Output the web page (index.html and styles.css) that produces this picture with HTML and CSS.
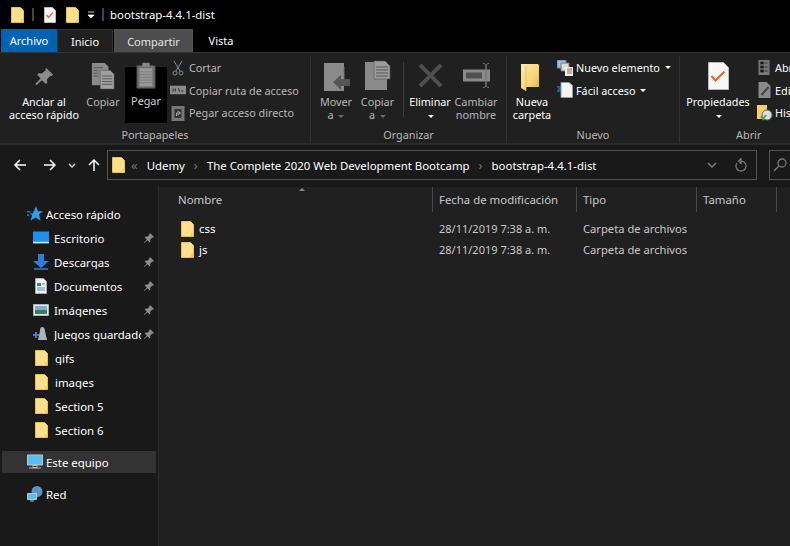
FILE: index.html
```html
<!DOCTYPE html>
<html lang="es">

<head>
    <meta charset="UTF-8">
    <meta name="viewport" content="width=device-width, initial-scale=1.0">
    <title>bootstrap-4.4.1-dist</title>
    <link rel="stylesheet" href="styles.css">
</head>

<body>
    <svg class="defs" width="0" height="0">
        <symbol id="folder" viewBox="0 0 13 16">
            <path d="M.5.5h9l3 3v12H.5z" fill="#ffe08a" stroke="#e8c04e"/>
            <path d="M10 15v-3h2.500v3z" fill="#f3cf66"/>
        </symbol>
        <symbol id="pin" viewBox="0 0 12 12">
            <path d="M7 1l4 4-1 .7-.8-.2-2 2.200.2 1.800-1 .8L4.300 8.200 1.500 11 1 10.500l2.800-2.800L1.700 5.600l.8-1 1.800.2 2.200-2-.2-.8z" fill="#8c8c8c"/>
        </symbol>
    </svg>

    <!-- barra de titulo -->
    <div class="titlebar">
        <svg class="qa-folder"><use href="#folder"/></svg>
        <span class="qa-sep"></span>
        <svg class="qa-check" viewBox="0 0 12 16">
            <path d="M.5.500h8l3 3v12H.5z" fill="#f5f5f5" stroke="#bbb"/>
            <path d="M2.500 8l2 2.500 4.500-5" fill="none" stroke="#e8622c" stroke-width="1.400"/>
        </svg>
        <svg class="qa-folder qa-folder2"><use href="#folder"/></svg>
        <svg class="qa-drop" viewBox="0 0 8 8">
            <path d="M1 1h6M1 4h6L4 7z" fill="#fff" stroke="#fff" stroke-width=".8"/>
        </svg>
        <span class="qa-sep qa-sep2"></span>
        <span class="title-text">bootstrap-4.4.1-dist</span>
    </div>

    <div class="tabs">
        <div class="tab tab-file">Archivo</div>
        <div class="tab tab-active">Inicio</div>
        <div class="tab tab-hover">Compartir</div>
        <div class="tab tab-plain">Vista</div>
    </div>

    <div class="ribbon">
        <div class="group group-clip">
            <div class="group-body">
                <div class="big big-pin">
                    <svg class="big-icon" viewBox="0 0 24 24">
                        <path d="M15 2l8 8-2 1.500-1.500-.5-4 4.500.5 4-2 1.500-4.500-4.500L3 22.500 1.500 21l6.500-6.500-4-4.500 1.500-2 4 .5 4.500-4-.5-1.500z" fill="#8a8a8a"/>
                    </svg>
                    <span>Anclar al<br>acceso rápido</span>
                </div>
                <div class="big big-copy dim">
                    <svg class="big-icon" viewBox="0 0 26 30">
                        <path d="M1 1h14l4 4v20H1z" fill="#8a8a8a"/>
                        <path d="M10 9h11l4 4v16H10z" fill="#a0a0a0" stroke="#555" stroke-width=".6"/>
                        <path d="M12 15h11M12 18h11M12 21h11M12 24h11M3 6h10M3 9h5M3 12h5M3 15h5" stroke="#555"/>
                    </svg>
                    <span>Copiar</span>
                </div>
                <div class="big big-paste dim">
                    <svg class="big-icon paste-icon" viewBox="0 0 22 30">
                        <path d="M1 4h20v25H1z" fill="#6f6f6f" stroke="#444"/>
                        <path d="M7 1h8v4H7z" fill="#888"/>
                        <path d="M4 7h14v20H4z" fill="#999"/>
                        <path d="M4 11h14M4 14h14M4 17h14M4 20h14M4 23h14" stroke="#777"/>
                    </svg>
                    <span>Pegar</span>
                </div>
                <div class="small-col dim">
                    <div class="small">
                        <svg viewBox="0 0 14 16" class="small-icon">
                            <path d="M3 1l6 10M11 1L5 11" stroke="#8a8a8a" fill="none"/>
                            <circle cx="4" cy="13" r="2" fill="none" stroke="#8a8a8a"/>
                            <circle cx="10" cy="13" r="2" fill="none" stroke="#8a8a8a"/>
                        </svg>
                        Cortar
                    </div>
                    <div class="small">
                        <svg viewBox="0 0 15 10" class="small-icon">
                            <path d="M0 1h15v8H0z" fill="#8a8a8a"/>
                            <path d="M3 3.500v3M5 3.500v3M8 3.500l1 3M10.500 6h2" stroke="#333"/>
                        </svg>
                        Copiar ruta de acceso
                    </div>
                    <div class="small">
                        <svg viewBox="0 0 13 16" class="small-icon">
                            <path d="M0 1h13v15H0z" fill="#777"/>
                            <path d="M3 4h7v9H3z" fill="#333"/>
                            <path d="M5 11V8h3M6 6l3 2-3 2" stroke="#aaa" fill="none"/>
                        </svg>
                        Pegar acceso directo
                    </div>
                </div>
            </div>
            <div class="group-label">Portapapeles</div>
        </div>

        <div class="group group-org">
            <div class="group-body">
                <div class="big big-move dim">
                    <svg class="big-icon" viewBox="0 0 27 29">
                        <path d="M1 1h20v28H1z" fill="#8a8a8a"/>
                        <path d="M21 5v16" stroke="#777"/>
                        <path d="M10 20l8-7v4h9v7h-9v4z" fill="#555"/>
                    </svg>
                    <span>Mover<br>a <i class="caret caret-dim"></i></span>
                </div>
                <div class="big big-copyto dim">
                    <svg class="big-icon" viewBox="0 0 27 30">
                        <path d="M1 2h22v28H1z" fill="#8a8a8a"/>
                        <path d="M10 1h11l5 5v13H10z" fill="#9c9c9c" stroke="#555" stroke-width=".6"/>
                        <path d="M12 7h12M12 10h12M12 13h12M12 16h12" stroke="#555"/>
                    </svg>
                    <span>Copiar<br>a <i class="caret caret-dim"></i></span>
                </div>
                <span class="vsep"></span>
                <div class="big big-del">
                    <svg class="big-icon" viewBox="0 0 26 26">
                        <path d="M2 2l22 22M24 2L2 24" stroke="#505050" stroke-width="4"/>
                    </svg>
                    <span>Eliminar<br><i class="caret"></i></span>
                </div>
                <div class="big big-ren dim">
                    <svg class="big-icon" viewBox="0 0 29 26">
                        <path d="M1 7h27v12H1z" fill="#8a8a8a"/>
                        <path d="M4 10h16v6H4z" fill="#505050"/>
                        <path d="M21 1c2 0 3 1 3 2v20c0 1-1 2-3 2M27 1c-2 0-3 1-3 2v20c0 1 1 2 3 2" stroke="#777" fill="none"/>
                    </svg>
                    <span>Cambiar<br>nombre</span>
                </div>
            </div>
            <div class="group-label">Organizar</div>
        </div>

        <div class="group group-new">
            <div class="group-body">
                <div class="big big-newf">
                    <svg class="big-icon" viewBox="0 0 19 28">
                        <defs>
                            <linearGradient id="fold" x1="0" y1="0" x2="1" y2="1">
                                <stop offset="0" stop-color="#fdeaa8"/>
                                <stop offset=".6" stop-color="#f6d47a"/>
                                <stop offset="1" stop-color="#dfae3e"/>
                            </linearGradient>
                        </defs>
                        <path d="M0 1h17l1 1v22H5v4l-5-3z" fill="url(#fold)"/>
                        <path d="M5 3v25" stroke="#e2b64c" stroke-width=".7"/>
                    </svg>
                    <span>Nueva<br>carpeta</span>
                </div>
                <div class="small-col">
                    <div class="small">
                        <svg viewBox="0 0 16 16" class="small-icon">
                            <path d="M0 0h9v8H0z" fill="#9cc3e8" stroke="#777"/>
                            <path d="M4 3h8v8H4z" fill="#ddd" stroke="#777"/>
                            <path d="M8 7h8v9H8z" fill="#f2f2f2"/>
                            <path d="M10 9h5M10 11h5M10 13h5" stroke="#c0573a"/>
                        </svg>
                        Nuevo elemento <i class="caret"></i>
                    </div>
                    <div class="small">
                        <svg viewBox="0 0 16 16" class="small-icon">
                            <path d="M4 .5h8l3.500 3v12H4z" fill="#f5f5f5" stroke="#999"/>
                            <path d="M0 5h4M1 7h3M0 9h4" stroke="#3d8fd6"/>
                        </svg>
                        Fácil acceso <i class="caret"></i>
                    </div>
                </div>
            </div>
            <div class="group-label">Nuevo</div>
        </div>

        <div class="group group-open">
            <div class="group-body">
                <div class="big big-prop">
                    <svg class="big-icon" viewBox="0 0 21 28">
                        <path d="M.5.500h15l5 5v22H.5z" fill="#f7f7f7" stroke="#bbb"/>
                        <path d="M3.500 14l4 4.500 9-9" fill="none" stroke="#e8622c" stroke-width="2"/>
                    </svg>
                    <span>Propiedades<br><i class="caret"></i></span>
                </div>
                <div class="small-col">
                    <div class="small">
                        <svg viewBox="0 0 13 16" class="small-icon">
                            <path d="M0 0h11v15H0z" fill="#777"/>
                            <path d="M2 2h3v2H2zM2 6h3v2H2zM2 10h3v2H2zM6 3h3M6 7h3M6 11h3" stroke="#333"/>
                        </svg>
                        Abrir
                    </div>
                    <div class="small">
                        <svg viewBox="0 0 13 16" class="small-icon">
                            <path d="M0 0h8l4 4v12H0z" fill="#8a8a8a"/>
                            <path d="M3 13l7-8" stroke="#444" stroke-width="2"/>
                        </svg>
                        Editar
                    </div>
                    <div class="small">
                        <svg viewBox="0 0 16 16" class="small-icon">
                            <path d="M0 0h10v14H0z" fill="#f4cf6c"/>
                            <circle cx="10" cy="10" r="5" fill="#ddd" stroke="#666"/>
                            <path d="M4 11l2 3 3-4" stroke="#3fae3f" stroke-width="2" fill="none"/>
                        </svg>
                        Historial
                    </div>
                </div>
            </div>
            <div class="group-label">Abrir</div>
        </div>
    </div>

    <!-- direccion -->
    <div class="addressrow">
        <svg class="nav-arrow" viewBox="0 0 14 14"><path d="M13 7H2M7 2L2 7l5 5" stroke="#fff" stroke-width="1.500" fill="none"/></svg>
        <svg class="nav-arrow" viewBox="0 0 14 14"><path d="M1 7h11M7 2l5 5-5 5" stroke="#fff" stroke-width="1.500" fill="none"/></svg>
        <svg class="nav-down" viewBox="0 0 8 5"><path d="M1 1l3 3 3-3" stroke="#ddd" stroke-width="1.300" fill="none"/></svg>
        <svg class="nav-arrow nav-up" viewBox="0 0 14 14"><path d="M7 13V2M2 7l5-5 5 5" stroke="#fff" stroke-width="1.500" fill="none"/></svg>
        <div class="addressbox">
            <svg class="addr-folder"><use href="#folder"/></svg>
            <span class="crumb-sep crumb-first">«</span>
            <span class="crumb">Udemy</span>
            <span class="crumb-sep">›</span>
            <span class="crumb">The Complete 2020 Web Development Bootcamp</span>
            <span class="crumb-sep">›</span>
            <span class="crumb">bootstrap-4.4.1-dist</span>
            <svg class="addr-drop" viewBox="0 0 10 6"><path d="M1 1l4 4 4-4" stroke="#7c7c7c" stroke-width="1.500" fill="none"/></svg>
            <svg class="addr-refresh" viewBox="0 0 12 14"><path d="M6 3a5 5 0 1 1-4 2M6 .5v5L3.500 3z" stroke="#7c7c7c" stroke-width="1.200" fill="none"/></svg>
        </div>
        <div class="searchbox">
            <svg class="search-icon" viewBox="0 0 14 14"><circle cx="9" cy="5" r="4" fill="none" stroke="#777" stroke-width="1.300"/><path d="M6 8l-5 5" stroke="#777" stroke-width="1.500"/></svg>
        </div>
    </div>

    <div class="main">
        <nav class="sidebar">
            <div class="nav-row head first">
                <svg class="nav-icon" viewBox="0 0 14 14"><path d="M8 0l1.500 4.500H14l-3.500 3L12 13 7.500 10 3 13l1.500-5L2 6.500h3z" fill="#2f9bea"/><path d="M0 5h3M0 8h2" stroke="#2f9bea"/></svg>
                <span class="nav-label">Acceso rápido</span>
            </div>
            <div class="nav-row">
                <svg class="nav-icon" viewBox="0 0 16 13"><path d="M0 0h16v12H0z" fill="#1e90f0"/><path d="M0 11h16" stroke="#c8e4fb" stroke-width="1.500"/></svg>
                <span class="nav-label">Escritorio</span>
                <svg class="nav-pin"><use href="#pin"/></svg>
            </div>
            <div class="nav-row">
                <svg class="nav-icon" viewBox="0 0 16 16"><path d="M5 0h6v7h5l-8 7-8-7h5z" fill="#2f7fd6"/><path d="M1 15h14" stroke="#2f7fd6" stroke-width="1.500"/></svg>
                <span class="nav-label">Descargas</span>
                <svg class="nav-pin"><use href="#pin"/></svg>
            </div>
            <div class="nav-row">
                <svg class="nav-icon" viewBox="0 0 14 16"><path d="M1.500.500h8l3 3v12h-11z" fill="#f2f2f2" stroke="#aaa"/><path d="M3 5h4v3H3z" fill="#2f7fd6"/><path d="M3 10h8M3 12h8M8 6h3" stroke="#5f88b0"/></svg>
                <span class="nav-label">Documentos</span>
                <svg class="nav-pin"><use href="#pin"/></svg>
            </div>
            <div class="nav-row">
                <svg class="nav-icon" viewBox="0 0 16 12"><path d="M.5.500h15v11H.5z" fill="#dfe7ee" stroke="#b5b5b5"/><path d="M2 2h12v4H2z" fill="#7fb0cc"/><path d="M2 6h12v4H2z" fill="#3f7a5c"/></svg>
                <span class="nav-label">Imágenes</span>
                <svg class="nav-pin"><use href="#pin"/></svg>
            </div>
            <div class="nav-row">
                <svg class="nav-icon" viewBox="0 0 16 16"><path d="M9 1c2 0 3 2 3 4l2 9H5l2-9C7 3 7.500 1 9 1z" fill="#aab4be"/><path d="M0 9h6M3 6v6" stroke="#3d7fd0" stroke-width="2"/></svg>
                <span class="nav-label">Juegos guardados</span>
                <svg class="nav-pin"><use href="#pin"/></svg>
            </div>
            <div class="nav-row"><svg class="nav-icon nav-folder"><use href="#folder"/></svg><span class="nav-label">gifs</span></div>
            <div class="nav-row"><svg class="nav-icon nav-folder"><use href="#folder"/></svg><span class="nav-label">images</span></div>
            <div class="nav-row"><svg class="nav-icon nav-folder"><use href="#folder"/></svg><span class="nav-label">Section 5</span></div>
            <div class="nav-row"><svg class="nav-icon nav-folder"><use href="#folder"/></svg><span class="nav-label">Section 6</span></div>
            <div class="nav-row head pc">
                <svg class="nav-icon" viewBox="0 0 16 15"><path d="M.5.500h15v10H.5z" fill="#59bdf5" stroke="#c4c4c4"/><path d="M6 11h4v2H6zM2 13.500h12" stroke="#c4c4c4"/></svg>
                <span class="nav-label">Este equipo</span>
            </div>
            <div class="nav-row head red">
                <svg class="nav-icon" viewBox="0 0 16 16"><circle cx="10" cy="5.500" r="5.500" fill="#5b93c4"/><path d="M.5 7.500h9v6h-9z" fill="#59bdf5" stroke="#c4c4c4"/><path d="M3 15h4" stroke="#c4c4c4"/></svg>
                <span class="nav-label">Red</span>
            </div>
        </nav>

        <section class="files">
            <span class="sort-arrow"></span>
            <div class="file-head">
                <div class="col col-name">Nombre</div>
                <div class="col col-date">Fecha de modificación</div>
                <div class="col col-type">Tipo</div>
                <div class="col col-size">Tamaño</div>
            </div>
            <div class="file-row">
                <div class="cell col-name"><svg class="file-icon"><use href="#folder"/></svg>css</div>
                <div class="cell col-date">28/11/2019 7:38 a. m.</div>
                <div class="cell col-type">Carpeta de archivos</div>
            </div>
            <div class="file-row">
                <div class="cell col-name"><svg class="file-icon"><use href="#folder"/></svg>js</div>
                <div class="cell col-date">28/11/2019 7:38 a. m.</div>
                <div class="cell col-type">Carpeta de archivos</div>
            </div>
        </section>
    </div>
</body>

</html>
```

FILE: styles.css
```css
* {
    box-sizing: border-box;
}

html, body {
    height: 100%;
}

body {
    margin: 0;
    width: 790px;
    height: 546px;
    overflow: hidden;
    background: #191919;
    color: #fff;
    font-family: 'Noto Sans', 'Open Sans', sans-serif;
    font-size: 11.4px;
    line-height: 13px;
    display: flex;
    flex-direction: column;
}

svg {
    flex: none;
    display: block;
}

.defs {
    position: absolute;
}

/* title bar */
.titlebar {
    height: 29px;
    background: #000;
    display: flex;
    align-items: center;
    padding-left: 11px;
    flex: none;
}

.qa-folder {
    width: 13px;
    height: 16px;
}

.qa-sep {
    width: 2px;
    height: 13px;
    background: #444;
    margin-left: 8px;
}

.qa-sep2 {
    margin-left: 7px;
}

.qa-check {
    width: 12px;
    height: 16px;
    margin-left: 10px;
}

.qa-folder2 {
    margin-left: 10px;
}

.qa-drop {
    width: 8px;
    height: 8px;
    margin-left: 8px;
}

.title-text {
    margin-left: 6px;
}

/* tabs */
.tabs {
    height: 23px;
    background: #000;
    display: flex;
    flex: none;
    font-size: 11px;
}

.tab {
    height: 23px;
    display: flex;
    align-items: center;
    justify-content: center;
}

.tab-file {
    width: 56px;
    margin-left: 1px;
    background: #0063b1;
}

.tab-active {
    width: 56px;
    background: #202020;
    border: 1px solid #333;
    border-bottom: none;
}

.tab-hover {
    width: 79px;
    margin-left: 1px;
    background: #4d4d4d;
    border: 1px solid #555;
    border-bottom: none;
    color: #e4e4e4;
}

.tab-plain {
    width: 56px;
}

/* ribbon */
.ribbon {
    height: 93px;
    background: #202020;
    border-top: 1px solid #333;
    border-bottom: 2px solid #2b2b2b;
    display: flex;
    flex: none;
    overflow: hidden;
    font-size: 10.8px;
}

.group {
    display: flex;
    flex-direction: column;
    flex: none;
    border-right: 1px solid #333;
    margin-top: 3px;
}

.group-clip {
    width: 311px;
}

.group-org {
    width: 196px;
}

.group-new {
    width: 173px;
}

.group-open {
    flex: 1;
    border-right: none;
}

.group-body {
    height: 72px;
    display: flex;
    color: #fff;
}

.group-label {
    text-align: center;
    color: #b8b8b8;
    height: 15px;
    line-height: 14px;
}

.big {
    display: flex;
    flex-direction: column;
    align-items: center;
    text-align: center;
    flex: none;
    height: 68px;
    white-space: nowrap;
}

.big span {
    margin-top: auto;
    margin-bottom: 3px;
    display: block;
}

.dim {
    color: #b8b8b8;
}

.big-pin {
    width: 72px;
    margin-left: 8px;
    padding-top: 10px;
}

.big-pin .big-icon {
    width: 20px;
    height: 21px;
}

.big-copy {
    width: 38px;
    margin-left: 4px;
    padding-top: 6px;
}

.big-copy .big-icon {
    width: 24px;
    height: 28px;
}

.big-copy span,
.big-paste span {
    margin-bottom: 16px;
}

.big-paste {
    width: 42px;
    margin-left: 3px;
    background: #000;
    margin-top: 11px;
    height: 56px;
    color: #d0d0d0;
}

.paste-icon {
    width: 20px;
    height: 29px;
    margin-top: -6px;
}

.small-col {
    display: flex;
    flex-direction: column;
    gap: 3.5px;
    margin-left: 3px;
    padding-top: 2px;
}

.small {
    height: 19px;
    display: flex;
    align-items: center;
    white-space: nowrap;
    gap: 3px;
}

.small-icon {
    width: 16px;
    height: 16px;
}

.big-move {
    width: 34px;
    margin-left: 8px;
    padding-top: 6px;
}

.big-move .big-icon {
    width: 27px;
    height: 29px;
}

.big-copyto {
    width: 37px;
    margin-left: 6px;
    padding-top: 4px;
}

.big-copyto .big-icon {
    width: 27px;
    height: 30px;
}

.vsep {
    width: 1px;
    height: 55px;
    background: #3d3d3d;
    margin: 6px 5px 0 7px;
    flex: none;
}

.big-del {
    width: 42px;
    padding-top: 7px;
}

.big-del .big-icon {
    width: 25px;
    height: 25px;
}

.big-ren {
    width: 44px;
    margin-left: 3px;
    padding-top: 6px;
}

.big-ren .big-icon {
    width: 29px;
    height: 27px;
}

.big-newf {
    width: 40px;
    margin-left: 5px;
    padding-top: 7px;
}

.big-newf .big-icon {
    width: 19px;
    height: 28px;
    margin-right: 4px;
}

.big-prop {
    width: 66px;
    margin-left: 5px;
    padding-top: 6px;
}

.big-prop .big-icon {
    width: 21px;
    height: 28px;
}

.group-new .small-col {
    margin-left: 5px;
}

.group-open .small-col {
    margin-left: 6px;
}

.group-open .small {
    gap: 2px;
}

.caret {
    display: inline-block;
    width: 0;
    height: 0;
    border: 3px solid transparent;
    border-top: 3px solid #fff;
    border-bottom: none;
    vertical-align: middle;
    margin-left: 2px;
}

.caret-dim {
    border-top-color: #6a6a6a;
}

/* address row */
.addressrow {
    height: 42px;
    background: #191919;
    display: flex;
    align-items: center;
    flex: none;
    padding: 0 0 2px 13px;
}

.nav-arrow {
    width: 14px;
    height: 14px;
}

.nav-arrow + .nav-arrow {
    margin-left: 16px;
}

.nav-down {
    width: 8px;
    height: 5px;
    margin-left: 11px;
}

.nav-up {
    margin-left: 11px;
}

.addressbox {
    width: 650px;
    height: 30px;
    margin-left: 6px;
    border: 1px solid #555;
    background: #191919;
    display: flex;
    align-items: center;
    padding-left: 4px;
    flex: none;
}

.addr-folder {
    width: 13px;
    height: 16px;
}

.crumb {
    white-space: nowrap;
}

.crumb-sep {
    color: #777;
    margin: 0 9px;
    font-size: 13px;
}

.crumb-first {
    margin: 0 9px 0 6px;
}

.addr-drop {
    width: 10px;
    height: 6px;
    margin-left: auto;
}

.addr-refresh {
    width: 12px;
    height: 14px;
    margin: 0 9px 0 18px;
}

.searchbox {
    width: 40px;
    height: 30px;
    margin-left: 12px;
    border: 1px solid #555;
    border-right: none;
    flex: none;
    padding: 7px 0 0 3px;
}

.search-icon {
    width: 14px;
    height: 14px;
}

/* main */
.main {
    flex: 1;
    display: flex;
    min-height: 0;
}

.sidebar {
    width: 159px;
    background: #191919;
    border-right: 1px solid #2b2b2b;
    flex: none;
    padding: 15px 2px 0;
}

.nav-row {
    height: 24px;
    display: flex;
    align-items: center;
    padding-left: 31px;
    position: relative;
    white-space: nowrap;
}

.nav-row.head {
    padding-left: 25px;
}

.nav-icon {
    width: 16px;
    height: 16px;
}

.nav-folder {
    width: 13px;
    height: 16px;
    margin: 0 2px 0 2px;
    flex: none;
}

.nav-label {
    margin-left: 5px;
    width: 87px;
    overflow: hidden;
}

.head .nav-label {
    margin-left: 3px;
}

.nav-row.pc {
    margin-top: 9px;
    height: 22px;
    background: #333;
}

.nav-row.red {
    margin-top: 9px;
}

.nav-pin {
    position: absolute;
    left: 141px;
    top: 6px;
    width: 12px;
    height: 12px;
}

/* file list */
.files {
    flex: 1;
    background: #202020;
    position: relative;
}

.sort-arrow {
    position: absolute;
    left: 140px;
    top: 0;
    width: 6px;
    height: 4px;
    border-left: 3px solid transparent;
    border-right: 3px solid transparent;
    border-bottom: 3px solid #888;
}

.file-head {
    height: 25px;
    display: flex;
    color: #c8c8c8;
    margin-bottom: 6px;
}

.col {
    height: 25px;
    display: flex;
    align-items: center;
    border-right: 1px solid #4a4a4a;
    padding-left: 6px;
    flex: none;
}

.col-name {
    width: 274px;
    padding-left: 19px;
}

.col-date {
    width: 144px;
    padding-left: 6px;
}

.col-type {
    width: 120px;
    padding-left: 6px;
}

.col-size {
    width: 80px;
}

.file-row {
    height: 21px;
    display: flex;
    color: #fff;
}

.cell {
    display: flex;
    align-items: center;
    flex: none;
    color: #c8c8c8;
    font-size: 11px;
}

.cell.col-type {
    font-size: 11.2px;
}

.cell.col-name {
    padding-left: 22px;
    color: #fff;
    font-size: 11.4px;
}

.file-icon {
    width: 13px;
    height: 16px;
    margin-right: 5px;
}
```
